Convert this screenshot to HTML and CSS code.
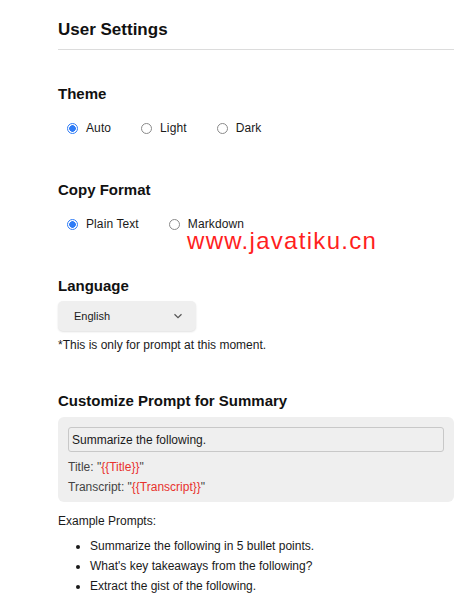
FILE: index.html
```html
<!DOCTYPE html>
<html lang="en">
<head>
    <meta charset="UTF-8">
    <meta name="viewport" content="width=device-width, initial-scale=1.0">
    <title>User Settings</title>
    <link rel="stylesheet" href="styles.css">
</head>
<body>
    <div class="container">
        <h1>User Settings</h1>

        <section class="setting">
            <h2>Theme</h2>
            <div class="radio-group">
                <label class="radio"><input type="radio" name="theme" checked> Auto</label>
                <label class="radio"><input type="radio" name="theme"> Light</label>
                <label class="radio"><input type="radio" name="theme"> Dark</label>
            </div>
        </section>

        <section class="setting">
            <h2>Copy Format</h2>
            <div class="radio-group">
                <label class="radio"><input type="radio" name="format" checked> Plain Text</label>
                <label class="radio"><input type="radio" name="format"> Markdown</label>
            </div>
            <span class="watermark">www.javatiku.cn</span>
        </section>

        <section class="setting">
            <h2>Language</h2>
            <div class="select">
                <span>English</span>
                <svg width="10" height="6" viewBox="0 0 10 6"><path d="M1.5 1.2 L5 4.6 L8.5 1.2" fill="none" stroke="#555" stroke-width="1.2"/></svg>
            </div>
            <p class="note">*This is only for prompt at this moment.</p>
        </section>

        <section class="setting prompt-setting">
            <h2>Customize Prompt for Summary</h2>
            <div class="prompt-box">
                <input type="text" class="prompt-input" value="Summarize the following.">
                <p>Title: "<span class="var">{{Title}}</span>"</p>
                <p>Transcript: "<span class="var">{{Transcript}}</span>"</p>
            </div>
            <p class="examples-title">Example Prompts:</p>
            <ul class="examples">
                <li>Summarize the following in 5 bullet points.</li>
                <li>What's key takeaways from the following?</li>
                <li>Extract the gist of the following.</li>
            </ul>
        </section>
    </div>
</body>
</html>
```

FILE: styles.css
```css
body {
    margin: 0;
    font-family: 'Liberation Sans', Arial, sans-serif;
    font-size: 12px;
    color: #1a1a1a;
    background-color: #ffffff;
}
.container {
    width: 396px;
    margin-left: 58px;
    padding-top: 20px;
}
h1 {
    font-size: 17px;
    font-weight: 700;
    margin: 0;
    padding-bottom: 9px;
    border-bottom: 1px solid #dcdcdc;
    color: #111;
}
h2 {
    font-size: 15px;
    font-weight: 700;
    margin: 0;
    color: #111;
}
.setting {
    position: relative;
}
.setting:nth-of-type(1) {
    margin-top: 35px;
}
.setting + .setting {
    margin-top: 46px;
}
.setting.prompt-setting {
    margin-top: 40px;
}
.radio-group {
    display: flex;
    gap: 30px;
    margin-top: 19px;
    padding-left: 9px;
}
.radio {
    display: flex;
    align-items: center;
    gap: 8px;
    line-height: 14px;
    letter-spacing: 0.1px;
}
.radio input {
    appearance: none;
    margin: 0;
    width: 11px;
    height: 11px;
    border: 1px solid #8a8a8a;
    border-radius: 50%;
    background: #fff;
}
.radio input:checked {
    border-color: #2f7cf6;
    background: radial-gradient(circle, #2f7cf6 0 3px, #fff 3.6px);
}
.watermark {
    position: absolute;
    left: 129px;
    top: 52px;
    font-size: 24px;
    line-height: 16px;
    letter-spacing: 1.3px;
    color: #ff1f1f;
}
.select {
    display: flex;
    justify-content: space-between;
    align-items: center;
    width: 138px;
    height: 30px;
    box-sizing: border-box;
    padding: 0 13px 0 16px;
    margin-top: 7px;
    background-color: #efefef;
    border-radius: 5px;
    box-shadow: 0 1px 2px rgba(0, 0, 0, 0.12);
    font-size: 11px;
}
.note {
    margin: 7px 0 0;
}
.prompt-box {
    margin-top: 8px;
    background-color: #efefef;
    border-radius: 6px;
    padding: 10px 10px 8px;
    color: #444;
}
.prompt-input {
    display: block;
    width: 100%;
    box-sizing: border-box;
    height: 25px;
    padding: 0 3px;
    background-color: #efefef;
    border: 1px solid #c8c8c8;
    border-radius: 3px;
    font-family: inherit;
    font-size: 12px;
    color: #1a1a1a;
}
.prompt-box p {
    margin: 6px 0 0;
    line-height: 14px;
}
.prompt-box .prompt-input + p {
    margin-top: 8px;
}
.var {
    color: #e8322e;
}
.examples-title {
    margin: 12px 0 0;
    font-size: 12px;
}
.examples {
    margin: 8px 0 0;
    padding-left: 32px;
}
.examples li {
    line-height: 20px;
}
```
